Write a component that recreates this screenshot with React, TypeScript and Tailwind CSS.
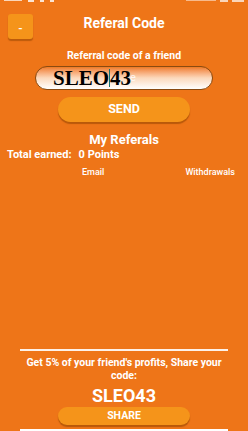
export default function App() {
  return (
    <div
      className="w-[248px] h-[431px] bg-[#ee7518] text-white flex flex-col overflow-hidden"
      style={{ fontFamily: "Roboto, 'Liberation Sans', sans-serif" }}
    >
      {/* status bar (cut off) */}
      <div className="h-[3px] flex justify-between px-[4px]">
        <div className="flex gap-[6px] items-start">
          <div className="w-[18px] h-[1px] bg-white/70" />
          <div className="w-[6px] h-[2px] bg-white/80" />
          <div className="w-[4px] h-[2px] bg-white/80" />
          <div className="w-[4px] h-[2px] bg-white/80" />
        </div>
        <div className="flex gap-[4px] items-start">
          <div className="w-[30px] h-[1px] bg-white/50" />
          <div className="w-[8px] h-[2px] bg-white/70" />
          <div className="w-[12px] h-[2px] bg-white/70" />
        </div>
      </div>

      {/* header */}
      <div className="relative h-[36px] mt-[11px] flex items-start justify-center">
        <button className="absolute left-[8px] top-0 w-[25px] h-[25px] rounded-[3px] bg-[#f5941a] shadow-[0_2px_1px_rgba(150,70,0,0.55)] text-[11px] font-bold leading-none pt-[3px]">
          -
        </button>
        <div className="text-[14px] font-bold leading-[18px]">Referal Code</div>
      </div>

      <div className="text-[10.5px] font-bold text-center -mt-[1px] leading-[14px]">Referral code of a friend</div>

      <div className="mt-[3px] mx-auto w-[178px] h-[24px] rounded-full border border-[#8a4a10] bg-gradient-to-b from-[#ee7a20] via-[#fbd9bc] to-white flex items-center pl-[17px] relative">
        <span className="text-black font-bold text-[21px] leading-none" style={{ fontFamily: "'Liberation Serif', serif" }}>
          SLEO
        </span>
        <span className="w-[1px] h-[18px] bg-[#127070]" />
        <span className="text-black font-bold text-[21px] leading-none" style={{ fontFamily: "'Liberation Serif', serif" }}>
          43
        </span>
        <span className="text-white/80 text-[11px] ml-[-1px] mt-[1px]">e</span>
      </div>

      <button className="mt-[7px] mx-auto w-[132px] h-[25px] rounded-full bg-[#f5941a] shadow-[0_2px_1px_rgba(150,70,0,0.6)] text-[12.5px] font-bold">
        SEND
      </button>

      <div className="mt-[10px] text-center text-[13px] font-bold leading-[16px]">My Referals</div>
      <div className="flex text-[11px] font-bold pl-[7px] leading-[14px]">
        <span>Total earned:</span>
        <span className="ml-[7px]">0 Points</span>
      </div>
      <div className="flex text-[9px] font-medium mt-[4px] leading-[12px]">
        <span className="ml-[82px]">Email</span>
        <span className="ml-auto mr-[13px]">Withdrawals</span>
      </div>

      <div className="flex-1" />

      <div className="mx-[20px] h-[2px] bg-white/90" />
      <div className="mt-[5px] px-[24px] text-center text-[10.5px] font-bold leading-[13px]">
        Get 5% of your friend's profits, Share your code:
      </div>
      <div className="mt-[4px] text-center text-[18px] font-bold leading-[20px]">SLEO43</div>
      <button className="mt-[1px] mx-auto w-[132px] h-[18px] rounded-full bg-[#f5941a] shadow-[0_2px_1px_rgba(150,70,0,0.6)] text-[10.5px] font-bold leading-none">
        SHARE
      </button>
      <div className="mt-[4px] mx-[20px] h-[2px] bg-white shrink-0" />
    </div>
  );
}
